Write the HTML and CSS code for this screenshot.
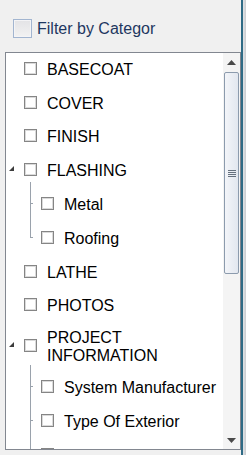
FILE: index.html
```html
<!DOCTYPE html>
<html>
<head>
<meta charset="utf-8">
<link rel="stylesheet" href="styles.css">
</head>
<body>
<div class="page">
  <div class="panel">
    <div class="header">
      <span class="hcb"></span>
      <span class="htitle">Filter by Categor</span>
    </div>
    <div class="box">
      <div class="tree">
        <div class="row"><span class="tg"></span><span class="cb"></span><span class="lbl">BASECOAT</span></div>
        <div class="row"><span class="tg"></span><span class="cb"></span><span class="lbl">COVER</span></div>
        <div class="row"><span class="tg"></span><span class="cb"></span><span class="lbl">FINISH</span></div>
        <div class="row"><span class="tg"><svg width="5" height="5" viewBox="0 0 5 5"><polygon points="5,0 5,5 0,5" fill="#3c3c3c"/></svg></span><span class="cb"></span><span class="lbl">FLASHING</span></div>
        <div class="children">
          <div class="row child"><span class="tg"></span><span class="cb"></span><span class="lbl">Metal</span></div>
          <div class="row child"><span class="tg"></span><span class="cb"></span><span class="lbl">Roofing</span></div>
        </div>
        <div class="row"><span class="tg"></span><span class="cb"></span><span class="lbl">LATHE</span></div>
        <div class="row"><span class="tg"></span><span class="cb"></span><span class="lbl">PHOTOS</span></div>
        <div class="row"><span class="tg"><svg width="5" height="5" viewBox="0 0 5 5"><polygon points="5,0 5,5 0,5" fill="#3c3c3c"/></svg></span><span class="cb"></span><span class="lbl">PROJECT INFORMATION</span></div>
        <div class="children open">
          <div class="row child"><span class="tg"></span><span class="cb"></span><span class="lbl">System Manufacturer</span></div>
          <div class="row child"><span class="tg"></span><span class="cb"></span><span class="lbl">Type Of Exterior</span></div>
          <div class="row child"><span class="tg"></span><span class="cb"></span></div>
        </div>
      </div>
      <div class="sbar">
        <div class="sbtn"><svg width="9" height="5" viewBox="0 0 9 5"><polygon points="4.5,0 9,5 0,5" fill="#4a4a4a"/></svg></div>
        <div class="strack">
          <div class="thumb"><span class="grip"></span></div>
        </div>
        <div class="sbtn"><svg width="9" height="5" viewBox="0 0 9 5"><polygon points="0,0 9,0 4.5,5" fill="#4a4a4a"/></svg></div>
      </div>
    </div>
  </div>
  <div class="edge"></div>
</div>
</body>
</html>
```
FILE: styles.css
```css
html, body {
  margin: 0;
  padding: 0;
  background: #f0f0f0;
  font-family: "Liberation Sans", Arial, sans-serif;
}

.page {
  display: flex;
  width: 246px;
  height: 455px;
  overflow: hidden;
}

.panel {
  width: 241px;
  display: flex;
  flex-direction: column;
}

.edge {
  width: 5px;
  box-sizing: border-box;
  border-left: 2px solid #2f6b86;
  background: linear-gradient(to right, #e2e4e6, #c9ccd0);
}

.header {
  display: flex;
  align-items: center;
  padding: 19px 0 14px 13px;
  height: 19px;
}

.hcb {
  width: 19px;
  height: 19px;
  box-sizing: border-box;
  border: 1px solid #a2b5d0;
  background: linear-gradient(#e3e3e6, #f2f2f2);
  box-shadow: inset 0 0 0 1px #f4f4f6;
  margin-right: 5px;
  flex: none;
}

.htitle {
  font-size: 16px;
  line-height: 18px;
  color: #1e3760;
  white-space: nowrap;
}

.box {
  margin-left: 5px;
  width: 236px;
  height: 398px;
  box-sizing: border-box;
  border: 1px solid #828790;
  background: #fff;
  display: flex;
}

.tree {
  flex: 1;
  overflow: hidden;
}

.row {
  display: flex;
  align-items: center;
  min-height: 33.8px;
  padding: 6px 0;
  box-sizing: border-box;
  font-size: 16px;
  line-height: 18px;
  color: #000;
  position: relative;
}

.row.child {
  padding-left: 17px;
}

.tg {
  width: 18px;
  height: 5px;
  flex: none;
  display: flex;
  margin-bottom: 6px;
}

.tg svg {
  margin-left: 3px;
  display: block;
}

.cb {
  width: 13px;
  height: 13px;
  flex: none;
  box-sizing: border-box;
  border: 1px solid #858585;
  background: #fff;
  box-shadow: inset 0 0 0 1px #dadada;
  margin-right: 10px;
  margin-bottom: 3px;
}

.lbl {
  flex: 1;
}

.children {
  position: relative;
}

.children::before {
  content: "";
  position: absolute;
  left: 24px;
  top: -6px;
  bottom: 18px;
  width: 1px;
  background: #9aa2ac;
}

.children.open::before {
  bottom: 0;
}

.row.child::before {
  content: "";
  position: absolute;
  left: 25px;
  top: calc(50% - 2px);
  width: 2px;
  height: 1px;
  background: #9aa2ac;
}

.sbar {
  width: 17px;
  flex: none;
  background: #f4f4f4;
  display: flex;
  flex-direction: column;
}

.sbtn {
  height: 18px;
  flex: none;
  display: flex;
  align-items: center;
  justify-content: center;
}

.strack {
  flex: 1;
  padding-top: 1px;
}

.thumb {
  margin-left: 1px;
  width: 15px;
  height: 202px;
  box-sizing: border-box;
  border: 1px solid #8c9bad;
  border-radius: 2px;
  background: linear-gradient(to right, #f3f5f9, #e2e7ef);
  display: flex;
  align-items: center;
  justify-content: center;
}

.grip {
  width: 8px;
  height: 7px;
  background: repeating-linear-gradient(to bottom, #66717e 0, #66717e 1px, transparent 1px, transparent 2px);
}
```
